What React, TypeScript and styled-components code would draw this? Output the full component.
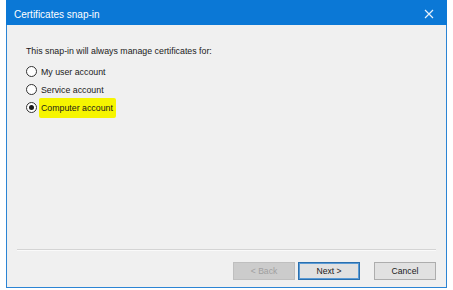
import React from 'react'
import styled, { createGlobalStyle } from 'styled-components'

const GlobalStyle = createGlobalStyle`
  html, body {
    margin: 0;
    padding: 0;
    background: #ffffff;
  }
  body {
    font-family: "Liberation Sans", Arial, sans-serif;
  }
`

const options = [
  { id: 'user', label: 'My user account', checked: false },
  { id: 'service', label: 'Service account', checked: false },
  { id: 'computer', label: 'Computer account', checked: true },
]

function App() {
  return (
    <>
      <GlobalStyle />
      <Page>
        <Window>
          <TitleBar>
            <Title>Certificates snap-in</Title>
            <CloseButton aria-label="Close">
              <svg width="10" height="10" viewBox="0 0 10 10">
                <path d="M1 1 L9 9 M9 1 L1 9" stroke="#e6f1fb" strokeWidth="1.2" />
              </svg>
            </CloseButton>
          </TitleBar>
          <Content>
            <Intro>This snap-in will always manage certificates for:</Intro>
            <RadioList>
              {options.map((o) => (
                <RadioRow key={o.id}>
                  <Radio $checked={o.checked} />
                  <RadioLabel $highlight={o.checked}>{o.label}</RadioLabel>
                </RadioRow>
              ))}
            </RadioList>
          </Content>
          <Footer>
            <Separator />
            <Buttons>
              <Button disabled>&lt; Back</Button>
              <Button $primary>Next &gt;</Button>
              <Gap />
              <Button>Cancel</Button>
            </Buttons>
          </Footer>
        </Window>
      </Page>
    </>
  )
}

const Page = styled.div`
  width: 453px;
  height: 290px;
  padding-left: 6px;
  box-sizing: border-box;
`

const Window = styled.div`
  width: 441px;
  height: 288px;
  box-sizing: border-box;
  display: flex;
  flex-direction: column;
  background: #f0f0f0;
  border: 1px solid #2b84d4;
  border-top: none;
`

const TitleBar = styled.div`
  height: 25px;
  margin: 0 -1px;
  background: #0b78d6;
  display: flex;
  align-items: center;
  justify-content: space-between;
  padding: 0 8px 0 8px;
`

const Title = styled.div`
  color: #ffffff;
  font-size: 10px;
  padding-top: 3px;
`

const CloseButton = styled.div`
  width: 20px;
  height: 20px;
  display: flex;
  align-items: center;
  justify-content: center;
  margin-top: 2px;
`

const Content = styled.div`
  flex: 1;
  padding: 21px 0 0 19px;
`

const Intro = styled.div`
  font-size: 8.8px;
  color: #1a1a1a;
  margin-bottom: 9px;
`

const RadioList = styled.div`
  display: flex;
  flex-direction: column;
  gap: 5px;
`

const RadioRow = styled.div`
  display: flex;
  align-items: center;
  height: 13px;
`

const Radio = styled.span<{ $checked?: boolean }>`
  width: 11px;
  height: 11px;
  border-radius: 50%;
  border: 1px solid #333333;
  background: #ffffff;
  box-sizing: border-box;
  display: flex;
  align-items: center;
  justify-content: center;
  &::after {
    content: '';
    width: 5px;
    height: 5px;
    border-radius: 50%;
    background: ${(p) => (p.$checked ? '#1a1a1a' : 'transparent')};
  }
`

const RadioLabel = styled.span<{ $highlight?: boolean }>`
  font-size: 8.8px;
  color: #1a1a1a;
  margin-left: 2px;
  padding: ${(p) => (p.$highlight ? '5px 3px 5px 2px' : '0 3px 0 2px')};
  background: ${(p) => (p.$highlight ? '#f6f500' : 'transparent')};
  border-radius: 2px;
`

const Footer = styled.div`
  padding: 0 10px 7px 10px;
`

const Separator = styled.div`
  height: 1px;
  background: #d4d4d4;
  border-bottom: 1px solid #fafafa;
  margin-bottom: 11px;
`

const Buttons = styled.div`
  display: flex;
  justify-content: flex-end;
  gap: 3px;
`

const Gap = styled.div`
  width: 8px;
`

const Button = styled.button<{ $primary?: boolean }>`
  width: 62px;
  height: 18px;
  font-family: "Liberation Sans", Arial, sans-serif;
  font-size: 8.6px;
  color: ${(p) => (p.disabled ? '#a0a0a0' : '#1a1a1a')};
  background: ${(p) => (p.disabled ? '#cccccc' : '#e1e1e1')};
  border: 1px solid ${(p) => (p.disabled ? '#bfbfbf' : p.$primary ? '#2a6fae' : '#adadad')};
  box-shadow: ${(p) => (p.$primary ? 'inset 0 0 0 1px #5b9bd5' : 'none')};
  padding: 0;
  box-sizing: border-box;
`

export default App
